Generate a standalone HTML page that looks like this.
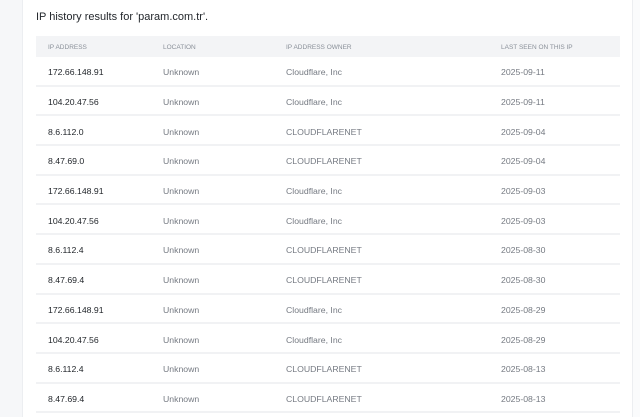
<!DOCTYPE html>
<html><head><style>
body{margin:0;width:640px;height:417px;overflow:hidden;background:#fff;font-family:"Liberation Sans",sans-serif;}
.l{position:absolute;left:0;top:0;width:22px;height:417px;background:#f6f7f9;border-right:1px solid #eceef1;}
.r{position:absolute;left:632px;top:0;width:8px;height:417px;background:#fafbfc;border-left:1px solid #eceef1;}
h1{position:absolute;left:36px;top:11px;margin:0;font-size:11px;font-weight:normal;color:#23272c;}
table{position:absolute;left:36px;top:36px;width:584px;border-collapse:collapse;}
th{height:21px;background:#f3f4f6;font-size:6.5px;font-weight:normal;color:#8a9099;text-align:left;padding:1px 0 0 0;box-sizing:border-box;}
td{height:24.7px;border-bottom:2px solid #f1f2f4;font-size:8.7px;color:#757a82;padding:3px 0 0 0;box-sizing:content-box;}
td:first-child{color:#23272c;}
th:nth-child(1),td:nth-child(1){padding-left:12px;width:115px}
th:nth-child(2),td:nth-child(2){width:123px}
th:nth-child(3),td:nth-child(3){width:215px}
</style></head><body>
<div class="l"></div><div class="r"></div>
<h1>IP history results for 'param.com.tr'.</h1>
<table>
<tr><th>IP ADDRESS</th><th>LOCATION</th><th>IP ADDRESS OWNER</th><th>LAST SEEN ON THIS IP</th></tr>
<tr><td>172.66.148.91</td><td>Unknown</td><td>Cloudflare, Inc</td><td>2025-09-11</td></tr>
<tr><td>104.20.47.56</td><td>Unknown</td><td>Cloudflare, Inc</td><td>2025-09-11</td></tr>
<tr><td>8.6.112.0</td><td>Unknown</td><td>CLOUDFLARENET</td><td>2025-09-04</td></tr>
<tr><td>8.47.69.0</td><td>Unknown</td><td>CLOUDFLARENET</td><td>2025-09-04</td></tr>
<tr><td>172.66.148.91</td><td>Unknown</td><td>Cloudflare, Inc</td><td>2025-09-03</td></tr>
<tr><td>104.20.47.56</td><td>Unknown</td><td>Cloudflare, Inc</td><td>2025-09-03</td></tr>
<tr><td>8.6.112.4</td><td>Unknown</td><td>CLOUDFLARENET</td><td>2025-08-30</td></tr>
<tr><td>8.47.69.4</td><td>Unknown</td><td>CLOUDFLARENET</td><td>2025-08-30</td></tr>
<tr><td>172.66.148.91</td><td>Unknown</td><td>Cloudflare, Inc</td><td>2025-08-29</td></tr>
<tr><td>104.20.47.56</td><td>Unknown</td><td>Cloudflare, Inc</td><td>2025-08-29</td></tr>
<tr><td>8.6.112.4</td><td>Unknown</td><td>CLOUDFLARENET</td><td>2025-08-13</td></tr>
<tr><td>8.47.69.4</td><td>Unknown</td><td>CLOUDFLARENET</td><td>2025-08-13</td></tr>
</table>
</body></html>
